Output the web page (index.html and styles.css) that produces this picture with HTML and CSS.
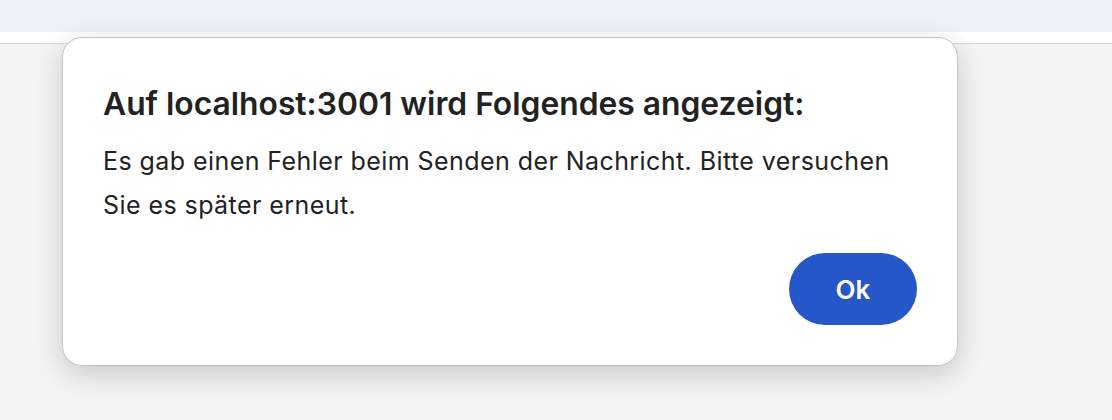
FILE: index.html
```html
<!DOCTYPE html>
<html lang="de">
<head>
<meta charset="utf-8">
<title>Alert</title>
<link rel="stylesheet" href="styles.css">
</head>
<body>
<div class="page">
  <div class="topbar"></div>
  <div class="strip"></div>
  <div class="content"></div>
</div>
<div class="dialog" role="alertdialog">
  <h1 class="title">Auf localhost:3001 wird Folgendes angezeigt:</h1>
  <p class="message">Es gab einen Fehler beim Senden der Nachricht. Bitte versuchen Sie es später erneut.</p>
  <div class="actions">
    <button class="ok">Ok</button>
  </div>
</div>
</body>
</html>
```

FILE: styles.css
```css
html, body {
  margin: 0;
  padding: 0;
  height: 100%;
}
body {
  font-family: Inter, "Noto Sans", sans-serif;
  background: #f4f4f4;
  overflow: hidden;
}
.page {
  display: flex;
  flex-direction: column;
  height: 100%;
}
.topbar {
  height: 32px;
  background: #edf1fa;
}
.strip {
  height: 11px;
  background: #ffffff;
  border-bottom: 1px solid #dcdcdc;
}
.content {
  flex: 1;
  background: #f4f4f4;
}
.dialog {
  position: absolute;
  left: 62px;
  top: 37px;
  width: 896px;
  height: 329px;
  box-sizing: border-box;
  background: #ffffff;
  border: 1px solid #c4c4c4;
  border-radius: 20px;
  box-shadow: 0 8px 28px rgba(0, 0, 0, 0.18);
  padding: 48px 40px 40px 40px;
  display: flex;
  flex-direction: column;
  color: #222222;
}
.title {
  margin: 0;
  font-size: 31.8px;
  font-weight: 600;
  line-height: 36px;
  letter-spacing: 0;
  white-space: nowrap;
}
.message {
  margin: 17px 0 0 0;
  font-size: 25px;
  font-weight: 400;
  line-height: 44px;
  letter-spacing: 0.43px;
}
.actions {
  margin-top: auto;
  display: flex;
  justify-content: flex-end;
}
.ok {
  width: 128px;
  height: 72px;
  border: none;
  border-radius: 36px;
  background: #2557c9;
  color: #ffffff;
  font-family: Inter, "Noto Sans", sans-serif;
  font-size: 26px;
  font-weight: 600;
  padding: 0;
}
```
